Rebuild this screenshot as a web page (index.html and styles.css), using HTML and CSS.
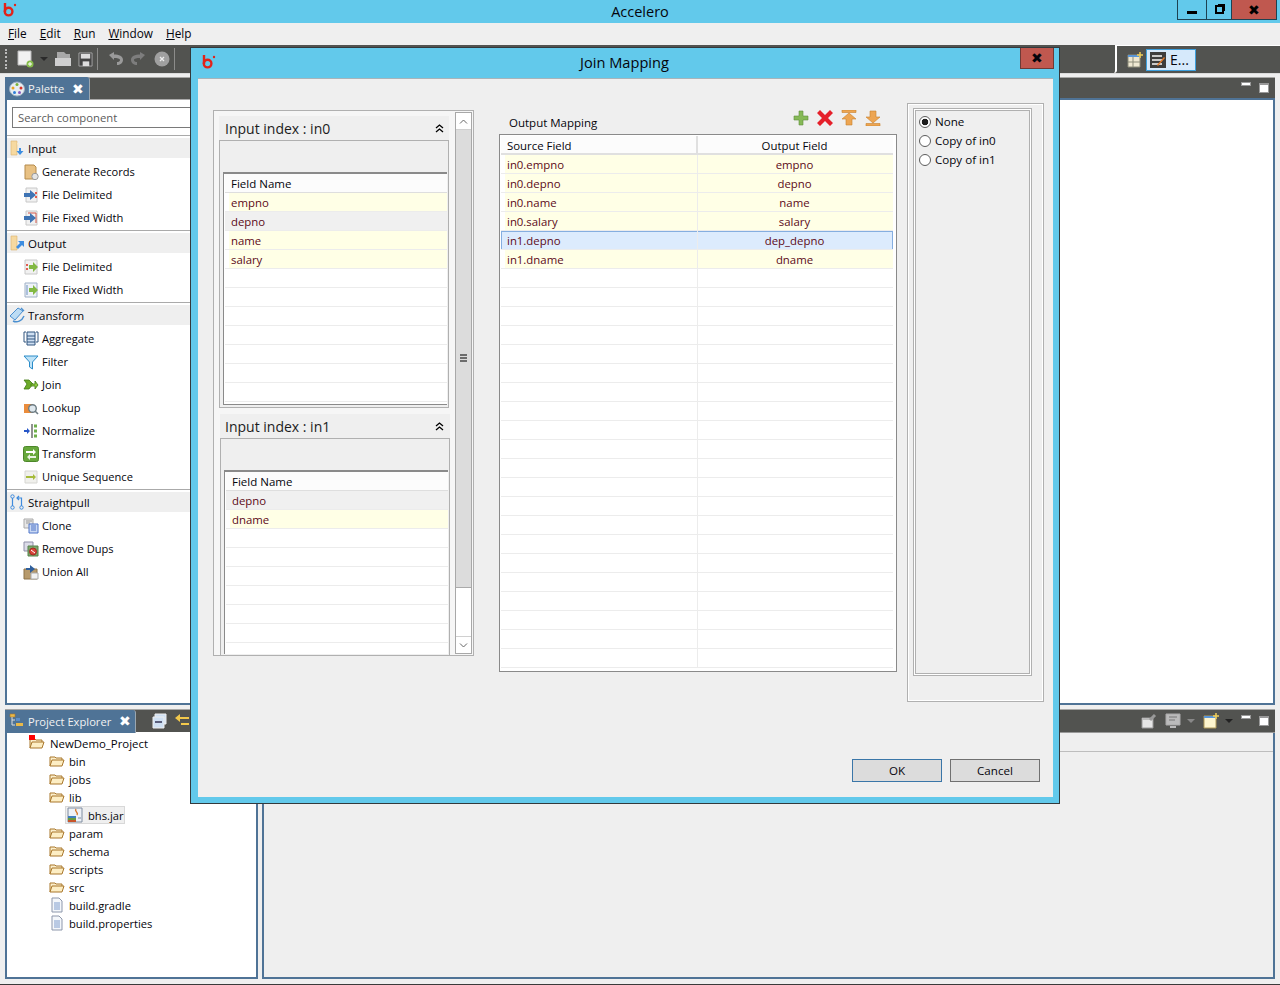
FILE: index.html
```html
<!DOCTYPE html>
<html lang="en">
<head>
    <meta charset="UTF-8">
    <title>Accelero</title>
    <link rel="stylesheet" href="styles.css">
</head>
<body>
<svg class="defs" width="0" height="0">
    <symbol id="logo" viewBox="0 0 16 16">
        <path d="M3 1v9" fill="none" stroke="#e2231a" stroke-width="2.4"/>
        <circle cx="6.6" cy="9.6" r="3.8" fill="none" stroke="#e2231a" stroke-width="2.4"/>
        <circle cx="13" cy="3" r="1.2" fill="#e2231a"/>
    </symbol>
    <symbol id="folder" viewBox="0 0 16 16">
        <path d="M1 13V4h5l1 1h6v2" fill="#fbeecb" stroke="#a9772b"/>
        <path d="M1 13l2-6h12l-2 6z" fill="#fdeec4" stroke="#a9772b"/>
    </symbol>
    <symbol id="doc" viewBox="0 0 16 16">
        <path d="M3 1h7l3 3v11H3z" fill="#f4f7fb" stroke="#8d97ab"/>
        <path d="M5 6h6M5 8h6M5 10h6M5 12h6" stroke="#7f9ccc"/>
    </symbol>
    <symbol id="drawer-in" viewBox="0 0 16 16">
        <path d="M2 1h6v14H2z" fill="#f6d9a0" stroke="#dcb46c" stroke-width=".6"/>
        <path d="M8 3h2v5" fill="#fbeed2"/>
        <path d="M12 8v3h2.5L11 15l-3.5-4H10V8z" fill="#3d8de0"/>
    </symbol>
    <symbol id="drawer-out" viewBox="0 0 16 16">
        <path d="M2 1h6v14H2z" fill="#f6d9a0" stroke="#dcb46c" stroke-width=".6"/>
        <path d="M7 12l4-4-2-2h6v6l-2-2-4 4z" fill="#3d8de0"/>
    </symbol>
    <symbol id="file-in" viewBox="0 0 16 16">
        <path d="M3 1h11v14H3z" fill="#f1f1f1" stroke="#c8c8c8"/>
        <path d="M1 6h6V3l6 5-6 5v-3H1z" fill="#3f74b4"/>
        <path d="M13 5v2M13 9v2" stroke="#e03a2a" stroke-width="1.6"/>
    </symbol>
    <symbol id="file-in2" viewBox="0 0 16 16">
        <path d="M3 1h11v14H3z" fill="#f1f1f1" stroke="#c8c8c8"/>
        <path d="M5 3h8v10" fill="none" stroke="#d0574a"/>
        <path d="M1 6h6V3l6 5-6 5v-3H1z" fill="#3f74b4"/>
    </symbol>
    <symbol id="file-out" viewBox="0 0 16 16">
        <path d="M2 1h12v14H2z" fill="#f1f1f1" stroke="#c8c8c8"/>
        <path d="M4 5v2M4 9v2" stroke="#e03a2a" stroke-width="1.6"/>
        <path d="M6 6h4V3l5 5-5 5v-3H6z" fill="#83b944"/>
    </symbol>
    <symbol id="file-out2" viewBox="0 0 16 16">
        <path d="M2 1h12v14H2z" fill="#eef2f8" stroke="#9fb0c6"/>
        <path d="M4 3v10" stroke="#6a8fc0"/>
        <path d="M6 6h4V3l5 5-5 5v-3H6z" fill="#83b944"/>
    </symbol>
    <symbol id="generate" viewBox="0 0 16 16">
        <path d="M2 1h9l2 2v12H2z" fill="#e8c184" stroke="#b48b4c"/>
        <circle cx="12" cy="12.5" r="3.2" fill="#e4e4e4" stroke="#999"/>
    </symbol>
    <symbol id="transform-group" viewBox="0 0 16 16">
        <path d="M1 9l8-8 5 3-8 9z" fill="#bcdcf4" stroke="#4a8fd0"/>
        <path d="M4 14c4 2 9 0 11-5M12 1l3 3" fill="none" stroke="#4a8fd0" stroke-width="1.4"/>
    </symbol>
    <symbol id="aggregate" viewBox="0 0 16 16">
        <path d="M3 1H1v10h2M13 1h2v10h-2" fill="none" stroke="#31557f"/>
        <path d="M4 1h8v13H4z" fill="#cfe0f3" stroke="#31557f"/>
        <path d="M4 5h8M4 8h8M4 11h8" stroke="#31557f"/>
    </symbol>
    <symbol id="filter" viewBox="0 0 16 16">
        <path d="M1 2h14L9.500 8v7l-3-2V8z" fill="#bfe3f7" stroke="#2b8cc9"/>
    </symbol>
    <symbol id="join" viewBox="0 0 16 16">
        <path d="M1 3h5l4 4-4 5H1l3-5z" fill="#6dab2a" stroke="#3f7813" stroke-width=".8"/>
        <path d="M8 7h4V4l3 4-3 4V9H8z" fill="#8cc63f" stroke="#3f7813" stroke-width=".8"/>
    </symbol>
    <symbol id="lookup" viewBox="0 0 16 16">
        <path d="M1 4h9v9H1z" fill="#ea8c3c"/>
        <circle cx="9.500" cy="8.500" r="3.800" fill="#dfe8ee" stroke="#6d7c83" stroke-width="1.400"/>
        <path d="M12 11l3 3" stroke="#6d7c83" stroke-width="1.600"/>
    </symbol>
    <symbol id="normalize" viewBox="0 0 16 16">
        <path d="M1 7h3V5l3 3-3 3V9H1z" fill="#2656c8"/>
        <path d="M9 1v14" stroke="#222"/>
        <path d="M11 3h3M11 8h3M11 13h3" stroke="#6faf4a" stroke-width="3"/>
    </symbol>
    <symbol id="transform" viewBox="0 0 16 16">
        <rect x="0.500" y="0.500" width="15" height="15" rx="2" fill="#67a83c" stroke="#4c8729"/>
        <path d="M3 5h7V3l3 3-3 3V7H3z" fill="#fff"/>
        <path d="M13 10H7V8l-3 3 3 3v-2h6z" fill="#fff" opacity=".85"/>
    </symbol>
    <symbol id="sequence" viewBox="0 0 16 16">
        <path d="M2 2h12v12H2z" fill="#f0f0ec" stroke="#d6d6d2"/>
        <path d="M3 7h7V5l3 3-3 3V9H3z" fill="#a6bb3a"/>
    </symbol>
    <symbol id="pull" viewBox="0 0 16 16">
        <circle cx="3.500" cy="2.500" r="1.700" fill="none" stroke="#3f8bdd"/>
        <circle cx="3.500" cy="13.500" r="1.700" fill="none" stroke="#3f8bdd"/>
        <circle cx="12.500" cy="13.500" r="1.700" fill="none" stroke="#3f8bdd"/>
        <path d="M3.500 4v8M12.500 12V4H8M10 2L8 4l2 2" fill="none" stroke="#3f8bdd" stroke-width="1.200"/>
    </symbol>
    <symbol id="clone" viewBox="0 0 16 16">
        <path d="M1 1h9v9H1z" fill="#e6e6e6" stroke="#aaa"/>
        <path d="M3 3h6M3 5h4" stroke="#999"/>
        <path d="M6 6h9v9H6z" fill="#c9d8f3" stroke="#4f74c8"/>
        <path d="M8 8h5M8 10h5M8 12h5" stroke="#4f74c8"/>
    </symbol>
    <symbol id="dups" viewBox="0 0 16 16">
        <path d="M1 1h9v9H1z" fill="#dcdce8" stroke="#8f8fa8"/>
        <path d="M5 5h10v10H5z" fill="#7aa86a" stroke="#56804a"/>
        <circle cx="10" cy="10.500" r="3.500" fill="#d9443a" stroke="#a02a22"/>
        <path d="M8 9l4 3" stroke="#fff"/>
    </symbol>
    <symbol id="union" viewBox="0 0 16 16">
        <path d="M1 5h13v10H1z" fill="#b79a6c" stroke="#8d7348"/>
        <path d="M3 4h4V1l5 4-5 4V6H3z" fill="#2f5f9c"/>
        <path d="M8 9h7v6H8z" fill="#f2f2f2" stroke="#aaa"/>
    </symbol>
    <symbol id="palette" viewBox="0 0 16 16">
        <ellipse cx="8" cy="8" rx="7.500" ry="7" fill="#e8edf2" stroke="#9fb0c0"/>
        <circle cx="4" cy="7" r="1.500" fill="#e8a320"/>
        <circle cx="8" cy="3.500" r="1.500" fill="#79b33a"/>
        <circle cx="12" cy="7" r="1.500" fill="#d8352a"/>
        <circle cx="5.500" cy="11.500" r="1.500" fill="#2f7fd8"/>
        <circle cx="10.500" cy="11.500" r="1.500" fill="#8a5ac0"/>
    </symbol>
    <symbol id="explorer" viewBox="0 0 16 16">
        <path d="M1 1h5v3H1z" fill="#e9b949" stroke="#a9772b" stroke-width=".6"/>
        <path d="M3 4v8h3M3 7h3" stroke="#ddd" fill="none"/>
        <path d="M7 5h4v3H7z" fill="#5b8dc9"/>
        <path d="M7 10h7v3H7z" fill="#e9b949"/>
    </symbol>
    <symbol id="jar" viewBox="0 0 16 16">
        <path d="M1 1h14v14H1z" fill="#eef1f6" stroke="#7f8ca0"/>
        <path d="M1 9h8v2H1z" fill="#3f7fbe"/>
        <path d="M1 11h8v2H1z" fill="#6a9b3a"/>
        <path d="M1 13h8v2H1z" fill="#c8552b"/>
        <path d="M9 2c-2 3 3 3 1 6" fill="none" stroke="#d8782a" stroke-width="1.400"/>
        <path d="M11 11h3" stroke="#7f8ca0"/>
    </symbol>
</svg>

<div class="app">
    <div class="titlebar">
        <svg class="logo"><use href="#logo"/></svg>
        <span class="app-title">Accelero</span>
        <div class="win-buttons">
            <div class="win-btn win-min"><span class="glyph-min"></span></div>
            <div class="win-btn win-max"><span class="glyph-max"></span></div>
            <div class="win-btn win-close">&#10006;</div>
        </div>
    </div>

    <div class="menubar">
        <span class="menu-item"><u>F</u>ile</span>
        <span class="menu-item"><u>E</u>dit</span>
        <span class="menu-item"><u>R</u>un</span>
        <span class="menu-item"><u>W</u>indow</span>
        <span class="menu-item"><u>H</u>elp</span>
    </div>

    <div class="toolbar">
        <div class="tools">
            <span class="gripper"></span>
            <svg class="tool tool-new" viewBox="0 0 18 18"><path d="M1 1h13v14H1z" fill="#f2f2f2" stroke="#bbb"/><circle cx="13" cy="14" r="3.500" fill="#86bd4a"/><path d="M11 14h4M13 12v4" stroke="#fff"/></svg>
            <span class="tool-arrow"></span>
            <svg class="tool tool-open" viewBox="0 0 18 18"><path d="M3 2h7l2 2h4v6H3z" fill="#a8a8a8"/><path d="M1 8h16v8H1z" fill="#cfcfcf"/></svg>
            <svg class="tool tool-save" viewBox="0 0 16 16"><path d="M1 1h14v14H1z" fill="#444" stroke="#a5a5a5"/><path d="M3 2h10v5H3z" fill="#ddd"/><path d="M5 10h7v5H5z" fill="#ddd"/></svg>
            <span class="tool-sep"></span>
            <svg class="tool tool-undo" viewBox="0 0 16 16"><path d="M1 4l5-3v2.500c5 0 9 1.500 9 5.500 0 3-3 5-6 5V11c1.500 0 3-.5 3-2 0-1.500-3-2-6-2v2z" fill="#9a9a9a"/></svg>
            <svg class="tool tool-redo" viewBox="0 0 16 16"><path d="M15 4l-5-3v2.500C5 3.500 1 5 1 9c0 3 3 5 6 5V11c-1.500 0-3-.5-3-2 0-1.500 3-2 6-2v2z" fill="#7d7d7d"/></svg>
            <svg class="tool tool-stop" viewBox="0 0 16 16"><circle cx="8" cy="8" r="7.500" fill="#a0a0a0"/><path d="M6 6l4 4M10 6l-4 4" stroke="#eee" stroke-width="1.300"/></svg>
            <span class="tool-sep tool-sep-2"></span>
        </div>
        <div class="perspectives">
            <svg class="persp-open" viewBox="0 0 16 16"><path d="M1 3h12v12H1z" fill="#efe8d2" stroke="#8d8d7a"/><path d="M1 3h12v2H1z" fill="#5a96d8"/><path d="M6 5v10M1 10h12" stroke="#8d8d7a"/><path d="M13 0v6M10 3h6" stroke="#f0cf5a" stroke-width="1.500"/></svg>
            <div class="persp-btn">
                <svg class="persp-icon" viewBox="0 0 16 16"><path d="M0 0h16v16H0z" fill="#3d3d3d"/><path d="M2 3h10v2H2zM2 7h10v2H2zM2 11h10v2H2z" fill="#c9c9c9"/><path d="M7 13l7-8 1 1-7 8z" fill="#e37a2a"/></svg>
                <span>E...</span>
            </div>
        </div>
    </div>

    <div class="workbench">
        <div class="side">
            <section class="panel panel-palette">
                <div class="tabbar">
                    <div class="tab tab-palette">
                        <svg class="icon"><use href="#palette"/></svg>
                        <span>Palette</span>
                        <span class="tab-close">&#10006;</span>
                    </div>
                </div>
                <div class="panel-body">
                    <div class="search">Search component</div>
                    <div class="group">
                        <div class="group-head"><svg class="icon"><use href="#drawer-in"/></svg>Input</div>
                        <ul class="items">
                            <li><svg class="icon"><use href="#generate"/></svg>Generate Records</li>
                            <li><svg class="icon"><use href="#file-in"/></svg>File Delimited</li>
                            <li><svg class="icon"><use href="#file-in2"/></svg>File Fixed Width</li>
                        </ul>
                    </div>
                    <div class="group">
                        <div class="group-head"><svg class="icon"><use href="#drawer-out"/></svg>Output</div>
                        <ul class="items">
                            <li><svg class="icon"><use href="#file-out"/></svg>File Delimited</li>
                            <li><svg class="icon"><use href="#file-out2"/></svg>File Fixed Width</li>
                        </ul>
                    </div>
                    <div class="group">
                        <div class="group-head"><svg class="icon"><use href="#transform-group"/></svg>Transform</div>
                        <ul class="items">
                            <li><svg class="icon"><use href="#aggregate"/></svg>Aggregate</li>
                            <li><svg class="icon"><use href="#filter"/></svg>Filter</li>
                            <li><svg class="icon"><use href="#join"/></svg>Join</li>
                            <li><svg class="icon"><use href="#lookup"/></svg>Lookup</li>
                            <li><svg class="icon"><use href="#normalize"/></svg>Normalize</li>
                            <li><svg class="icon"><use href="#transform"/></svg>Transform</li>
                            <li><svg class="icon"><use href="#sequence"/></svg>Unique Sequence</li>
                        </ul>
                    </div>
                    <div class="group">
                        <div class="group-head"><svg class="icon"><use href="#pull"/></svg>Straightpull</div>
                        <ul class="items">
                            <li><svg class="icon"><use href="#clone"/></svg>Clone</li>
                            <li><svg class="icon"><use href="#dups"/></svg>Remove Dups</li>
                            <li><svg class="icon"><use href="#union"/></svg>Union All</li>
                        </ul>
                    </div>
                </div>
            </section>

            <section class="panel panel-explorer">
                <div class="tabbar">
                    <div class="tab tab-explorer">
                        <svg class="icon"><use href="#explorer"/></svg>
                        <span>Project Explorer</span>
                        <span class="tab-close">&#10006;</span>
                    </div>
                    <svg class="tab-tool" viewBox="0 0 16 16"><path d="M3 1h11v10H3z" fill="#cfe0f3" stroke="#eee"/><path d="M1 4h11v11H1z" fill="#cfe0f3" stroke="#eee"/><path d="M3 9h7" stroke="#335" stroke-width="1.500"/></svg>
                    <svg class="tab-tool" viewBox="0 0 16 16"><path d="M1 5l5-4v3h9v2H6v3z" fill="#f2c84b"/><path d="M7 10h8v2H7z" fill="#f2c84b"/></svg>
                </div>
                <div class="tree">
                    <div class="tree-row tree-root"><svg class="icon"><use href="#folder"/></svg><i class="root-mark"></i>NewDemo_Project</div>
                    <div class="tree-row"><svg class="icon"><use href="#folder"/></svg>bin</div>
                    <div class="tree-row"><svg class="icon"><use href="#folder"/></svg>jobs</div>
                    <div class="tree-row"><svg class="icon"><use href="#folder"/></svg>lib</div>
                    <div class="tree-row tree-leaf"><span class="tree-sel"><svg class="icon"><use href="#jar"/></svg>bhs.jar</span></div>
                    <div class="tree-row"><svg class="icon"><use href="#folder"/></svg>param</div>
                    <div class="tree-row"><svg class="icon"><use href="#folder"/></svg>schema</div>
                    <div class="tree-row"><svg class="icon"><use href="#folder"/></svg>scripts</div>
                    <div class="tree-row"><svg class="icon"><use href="#folder"/></svg>src</div>
                    <div class="tree-row"><svg class="icon"><use href="#doc"/></svg>build.gradle</div>
                    <div class="tree-row"><svg class="icon"><use href="#doc"/></svg>build.properties</div>
                </div>
            </section>
        </div>

        <div class="main">
            <section class="panel panel-editor">
                <div class="tabbar tabbar-right">
                    <span class="view-min"></span>
                    <span class="view-max"></span>
                </div>
                <div class="editor-body"></div>
            </section>
            <section class="panel panel-console">
                <div class="tabbar tabbar-right">
                    <svg class="tab-tool tool-pin" viewBox="0 0 16 16"><path d="M1 5h11v10H1z" fill="#e6e6e6" stroke="#999"/><path d="M1 5h11v2H1z" fill="#bbb"/><path d="M9 7l5-5" stroke="#999" stroke-width="3"/></svg>
                    <svg class="tab-tool" viewBox="0 0 16 16"><path d="M1 1h14v11H1z" fill="#bbb" stroke="#aaa"/><path d="M4 4h8M4 7h6" stroke="#777"/><path d="M5 14h6" stroke="#bbb" stroke-width="2"/></svg>
                    <span class="tab-arrow tab-arrow-dim"></span>
                    <svg class="tab-tool" viewBox="0 0 16 16"><path d="M1 3h12v12H1z" fill="#fdf5cf" stroke="#b09a58"/><path d="M1 3h12v2H1z" fill="#5a96d8"/><path d="M13 0v6M10 3h6" stroke="#f0cf5a" stroke-width="1.500"/></svg>
                    <span class="tab-arrow"></span>
                    <span class="view-min"></span>
                    <span class="view-max"></span>
                </div>
                <div class="console-line"></div>
            </section>
        </div>
    </div>
    <div class="statusline"></div>
</div>

<div class="dialog">
    <div class="dialog-title">
        <svg class="logo"><use href="#logo"/></svg>
        <span class="dialog-name">Join Mapping</span>
        <div class="dialog-close">&#10006;</div>
    </div>
    <div class="dialog-body">
        <div class="columns">
            <div class="inputs">
                <div class="inputs-scroll">
                    <div class="input-section">
                        <div class="section-head">
                            <span>Input index : in0</span>
                            <svg class="collapse" viewBox="0 0 9 9"><path d="M1 4l3.500-3L8 4M1 8l3.500-3L8 8" fill="none" stroke="#000" stroke-width="1.300"/></svg>
                        </div>
                        <div class="section-box">
                            <div class="field-table">
                                <div class="field-head">Field Name</div>
                                <div class="field-row filled">empno</div>
                                <div class="field-row current">depno</div>
                                <div class="field-row filled">name</div>
                                <div class="field-row filled">salary</div>
                                <div class="field-row"></div>
                                <div class="field-row"></div>
                                <div class="field-row"></div>
                                <div class="field-row"></div>
                                <div class="field-row"></div>
                                <div class="field-row"></div>
                                <div class="field-row"></div>
                            </div>
                        </div>
                    </div>
                    <div class="input-section second">
                        <div class="section-head">
                            <span>Input index : in1</span>
                            <svg class="collapse" viewBox="0 0 9 9"><path d="M1 4l3.500-3L8 4M1 8l3.500-3L8 8" fill="none" stroke="#000" stroke-width="1.300"/></svg>
                        </div>
                        <div class="section-box">
                            <div class="field-table">
                                <div class="field-head">Field Name</div>
                                <div class="field-row current">depno</div>
                                <div class="field-row filled">dname</div>
                                <div class="field-row"></div>
                                <div class="field-row"></div>
                                <div class="field-row"></div>
                                <div class="field-row"></div>
                                <div class="field-row"></div>
                                <div class="field-row"></div>
                            </div>
                        </div>
                    </div>
                </div>
                <div class="scrollbar">
                    <div class="scroll-btn"><svg viewBox="0 0 9 5"><path d="M1 4.500l3.500-3.500L8 4.500" fill="none" stroke="#666"/></svg></div>
                    <div class="scroll-thumb"><span class="thumb-grip"></span></div>
                    <div class="scroll-track"></div>
                    <div class="scroll-btn"><svg viewBox="0 0 9 5"><path d="M1 .5l3.500 3.500L8 .5" fill="none" stroke="#666"/></svg></div>
                </div>
            </div>

            <div class="mapping">
                <div class="mapping-top">
                    <span class="mapping-label">Output Mapping</span>
                    <div class="mapping-tools">
                        <svg viewBox="0 0 16 16"><path d="M6 1h4v5h5v4h-5v5H6v-5H1V6h5z" fill="#86b957" stroke="#5f8f3a" stroke-width=".6"/></svg>
                        <svg viewBox="0 0 16 16"><path d="M3 0l5 5 5-5 3 3-5 5 5 5-3 3-5-5-5 5-3-3 5-5-5-5z" fill="#e5202a"/></svg>
                        <svg viewBox="0 0 16 16"><path d="M1 0h14v2.500H1zM8 3l7 6h-4v6H5V9H1z" fill="#eda552" stroke="#c87f2c" stroke-width=".6"/></svg>
                        <svg viewBox="0 0 16 16"><path d="M1 13.500h14V16H1zM8 13l7-6h-4V1H5v6H1z" fill="#eda552" stroke="#c87f2c" stroke-width=".6"/></svg>
                    </div>
                </div>
                <div class="map-table">
                    <div class="map-head"><span class="map-src">Source Field</span><span class="map-out">Output Field</span></div>
                    <div class="map-row filled"><span class="map-src">in0.empno</span><span class="map-out">empno</span></div>
                    <div class="map-row filled"><span class="map-src">in0.depno</span><span class="map-out">depno</span></div>
                    <div class="map-row filled"><span class="map-src">in0.name</span><span class="map-out">name</span></div>
                    <div class="map-row filled"><span class="map-src">in0.salary</span><span class="map-out">salary</span></div>
                    <div class="map-row selected"><span class="map-src">in1.depno</span><span class="map-out">dep_depno</span></div>
                    <div class="map-row filled"><span class="map-src">in1.dname</span><span class="map-out">dname</span></div>
                    <div class="map-row"><span class="map-src"></span><span class="map-out"></span></div>
                    <div class="map-row"><span class="map-src"></span><span class="map-out"></span></div>
                    <div class="map-row"><span class="map-src"></span><span class="map-out"></span></div>
                    <div class="map-row"><span class="map-src"></span><span class="map-out"></span></div>
                    <div class="map-row"><span class="map-src"></span><span class="map-out"></span></div>
                    <div class="map-row"><span class="map-src"></span><span class="map-out"></span></div>
                    <div class="map-row"><span class="map-src"></span><span class="map-out"></span></div>
                    <div class="map-row"><span class="map-src"></span><span class="map-out"></span></div>
                    <div class="map-row"><span class="map-src"></span><span class="map-out"></span></div>
                    <div class="map-row"><span class="map-src"></span><span class="map-out"></span></div>
                    <div class="map-row"><span class="map-src"></span><span class="map-out"></span></div>
                    <div class="map-row"><span class="map-src"></span><span class="map-out"></span></div>
                    <div class="map-row"><span class="map-src"></span><span class="map-out"></span></div>
                    <div class="map-row"><span class="map-src"></span><span class="map-out"></span></div>
                    <div class="map-row"><span class="map-src"></span><span class="map-out"></span></div>
                    <div class="map-row"><span class="map-src"></span><span class="map-out"></span></div>
                    <div class="map-row"><span class="map-src"></span><span class="map-out"></span></div>
                    <div class="map-row"><span class="map-src"></span><span class="map-out"></span></div>
                    <div class="map-row"><span class="map-src"></span><span class="map-out"></span></div>
                    <div class="map-row"><span class="map-src"></span><span class="map-out"></span></div>
                    <div class="map-row"><span class="map-src"></span><span class="map-out"></span></div>
                </div>
            </div>

            <div class="options">
                <div class="options-inner">
                    <label class="radio-row"><span class="radio checked"></span>None</label>
                    <label class="radio-row"><span class="radio"></span>Copy of in0</label>
                    <label class="radio-row"><span class="radio"></span>Copy of in1</label>
                </div>
            </div>
        </div>
        <div class="dialog-buttons">
            <button class="btn btn-default">OK</button>
            <button class="btn">Cancel</button>
        </div>
    </div>
</div>
</body>
</html>
```

FILE: styles.css
```css
* {
    padding: 0;
    margin: 0;
    box-sizing: border-box;
}
:root {
    --sky: #62c9eb;
    --dark: #525350;
    --tab: #4f7396;
    --light: #efefef;
    --row-text: #5c0a18;
}
html, body {
    width: 1280px;
    height: 985px;
    overflow: hidden;
}
body {
    position: relative;
    background: var(--light);
    color: #05050c;
    font-family: "Open Sans", "Noto Sans", sans-serif;
    font-size: 11.1px;
}
.defs {
    position: absolute;
}
.app {
    display: flex;
    flex-direction: column;
    height: 985px;
}
.icon {
    width: 16px;
    height: 16px;
    flex: none;
}

/* title and menu */
.titlebar {
    display: flex;
    height: 23px;
    background: var(--sky);
    flex: none;
}
.titlebar .logo {
    width: 16px;
    height: 16px;
    margin: 2px 0 0 2px;
}
.app-title {
    position: absolute;
    left: 0;
    width: 1280px;
    top: 3px;
    text-align: center;
    font-size: 14.5px;
    line-height: 18px;
}
.win-buttons {
    display: flex;
    position: absolute;
    left: 1177px;
    top: 0;
    height: 20px;
    border: 1px solid #1d4252;
    border-top: 0;
    z-index: 1;
}
.win-btn {
    display: flex;
    justify-content: center;
    align-items: center;
    width: 28px;
}
.win-max {
    width: 26px;
    border-left: 1px solid #1d4252;
    border-right: 1px solid #1d4252;
}
.win-close {
    width: 44px;
    background: #c0584f;
    color: #000;
    font-size: 14px;
}
.glyph-min {
    width: 10px;
    height: 3px;
    margin-top: 5px;
    background: #000;
}
.glyph-max {
    width: 9px;
    height: 9px;
    border: 2px solid #000;
    box-shadow: 2px -2px 0 -1px #000;
}
.menubar {
    display: flex;
    align-items: center;
    gap: 13px;
    height: 22px;
    padding: 0 0 2px 8px;
    flex: none;
    font-size: 11.8px;
    line-height: 20px;
}

/* main toolbar */
.toolbar {
    display: flex;
    height: 29px;
    background: var(--dark);
    flex: none;
    border-bottom: 1px solid #dcdcdc;
}
.tools {
    display: flex;
    align-items: center;
    width: 1117px;
    padding-left: 5px;
    border-right: 2px solid #fff;
    border-bottom-right-radius: 3px;
}
.perspectives {
    display: flex;
    align-items: center;
    flex: 1;
    padding-left: 10px;
    border-top: 1px solid #fff;
}
.gripper {
    width: 2px;
    height: 20px;
    border-left: 2px dotted #bbb;
}
.tool {
    flex: none;
}
.tool-new {
    width: 18px;
    height: 18px;
    margin-left: 10px;
}
.tool-arrow {
    width: 0;
    height: 0;
    margin-left: 5px;
    border: 4px solid transparent;
    border-top: 4px solid #2a2a2a;
    border-bottom: 0;
}
.tool-open {
    width: 18px;
    height: 18px;
    margin-left: 6px;
}
.tool-save {
    width: 15px;
    height: 15px;
    margin-left: 6px;
}
.tool-sep {
    width: 1px;
    height: 22px;
    margin-left: 4px;
    background: #8c8c8a;
}
.tool-undo, .tool-redo, .tool-stop {
    width: 16px;
    height: 16px;
}
.tool-undo {
    margin-left: 10px;
}
.tool-redo {
    margin-left: 6px;
}
.tool-stop {
    margin-left: 8px;
}
.tool-sep-2 {
    margin-left: 4px;
}
.persp-open {
    width: 16px;
    height: 16px;
}
.persp-btn {
    display: flex;
    align-items: center;
    gap: 4px;
    width: 50px;
    height: 22px;
    margin-left: 3px;
    padding-left: 3px;
    background: #d6e9fb;
    border: 1px solid #3d9fdc;
    font-size: 14px;
}
.persp-icon {
    width: 16px;
    height: 16px;
}

/* workbench */
.workbench {
    display: flex;
    flex: 1;
    padding: 3px 5px 5px 5px;
    gap: 4px;
}
.statusline {
    height: 1px;
    background: #3a3a3a;
    flex: none;
}
.side {
    display: flex;
    flex-direction: column;
    width: 253px;
    gap: 4px;
    flex: none;
}
.main {
    display: flex;
    flex-direction: column;
    flex: 1;
    gap: 4px;
}
.panel {
    display: flex;
    flex-direction: column;
    border: 2px solid var(--tab);
    border-top: 0;
}
.panel-palette, .panel-editor {
    height: 628px;
    background: #fff;
}
.panel-explorer, .panel-console {
    flex: 1;
}
.panel-explorer {
    background: #fff;
}
.tabbar {
    display: flex;
    align-items: center;
    height: 23px;
    margin: 0 -2px;
    background: var(--dark);
    border-top: 1px solid #a8a8a6;
    flex: none;
}
.panel-palette .tabbar {
    border-bottom: 1px solid #aaa;
}
.tabbar-right {
    justify-content: flex-end;
    padding-right: 6px;
}
.panel-console .tabbar-right {
    border-bottom: 1px solid #999;
    height: 24px;
}
.panel-editor .tabbar-right {
    border-bottom: 2px solid var(--tab);
}
.tab {
    display: flex;
    align-items: center;
    gap: 3px;
    height: 23px;
    padding-left: 4px;
    background: var(--tab);
    color: #f2f2f2;
    border-top-right-radius: 3px;
    border-right: 1px solid #9aa6b0;
    font-size: 11.2px;
}
.tab-palette {
    width: 85px;
}
.tab-explorer {
    width: 131px;
    margin-right: 16px;
}
.tab-close {
    margin-left: 5px;
    font-size: 14px;
    line-height: 14px;
    color: #fff;
}
.tab-tool {
    width: 16px;
    height: 16px;
    margin-right: 6px;
    flex: none;
}
.tab-tool.tool-pin {
    margin-right: 8px;
}
.tab-arrow {
    width: 0;
    height: 0;
    border: 4px solid transparent;
    border-top: 4px solid #222;
    border-bottom: 0;
    margin-right: 8px;
}
.view-min {
    width: 10px;
    height: 4px;
    margin-right: 8px;
    margin-bottom: 8px;
    background: #fff;
    border: 1px solid #999;
}
.view-max {
    width: 10px;
    height: 10px;
    background: #fff;
    border: 1px solid #999;
    border-top-width: 2px;
}
.tab-arrow.tab-arrow-dim {
    border-top-color: #888;
}

/* palette */
.panel-body {
    flex: 1;
    padding: 7px 0 0 0;
}
.search {
    height: 21px;
    margin: 0 0 7px 5px;
    padding: 0 0 0 5px;
    border: 1px solid #7a7a7a;
    line-height: 19px;
    color: #5c5c5c;
    font-size: 11.3px;
}
.group {
    border-top: 1px solid #aaa;
    padding-top: 2px;
}
.group-head {
    display: flex;
    align-items: center;
    gap: 3px;
    height: 20px;
    padding-left: 2px;
    background: var(--light);
    font-size: 11.5px;
}
.items {
    list-style: none;
    padding: 2px 0 1px 0;
}
.items li {
    display: flex;
    align-items: center;
    gap: 3px;
    height: 23px;
    padding-left: 16px;
}

/* project explorer */
.tree {
    padding-top: 2px;
}
.tree-row {
    display: flex;
    align-items: center;
    gap: 4px;
    height: 18px;
    padding-left: 42px;
    position: relative;
    font-size: 11.2px;
}
.tree-root {
    padding-left: 22px;
    gap: 5px;
    font-size: 11.4px;
}
.root-mark {
    position: absolute;
    left: 22px;
    top: 1px;
    width: 6px;
    height: 5px;
    background: #f00;
}
.tree-leaf {
    padding-left: 58px;
}
.tree-sel {
    display: flex;
    align-items: center;
    gap: 5px;
    height: 18px;
    width: 60px;
    padding: 0 1px;
    background: var(--light);
    border: 1px solid #d8d8d8;
}
.editor-body {
    flex: 1;
    background: #fff;
}
.panel-console {
    background: var(--light);
}
.console-line {
    height: 1px;
    margin-top: 18px;
    background: #bdbdbd;
}

/* dialog */
.dialog {
    position: absolute;
    left: 190px;
    top: 47px;
    width: 870px;
    height: 757px;
    display: flex;
    flex-direction: column;
    padding: 0 6px 6px 7px;
    background: var(--sky);
    border: 1px solid #33393c;
    z-index: 2;
}
.dialog-title {
    display: flex;
    height: 30px;
    flex: none;
    position: relative;
}
.dialog-title .logo {
    width: 16px;
    height: 16px;
    margin: 6px 0 0 3px;
}
.dialog-name {
    position: absolute;
    left: 0;
    width: 853px;
    top: 5px;
    text-align: center;
    font-size: 14.6px;
    line-height: 18px;
}
.dialog-close {
    position: absolute;
    right: -1px;
    top: 0;
    width: 34px;
    height: 21px;
    background: #c0584f;
    border: 1px solid #6e3a36;
    border-top: 0;
    text-align: center;
    font-size: 14px;
    line-height: 19px;
}
.dialog-body {
    flex: 1;
    display: flex;
    flex-direction: column;
    background: var(--light);
    border-top: 1px solid #a8b4ba;
    padding: 24px 9px 15px 15px;
}
.columns {
    display: flex;
    align-items: flex-start;
    height: 599px;
    flex: none;
}

/* input tables */
.inputs {
    display: flex;
    width: 261px;
    height: 546px;
    margin-top: 7px;
    border: 1px solid #b0b0b0;
    background: #f6f6f6;
    flex: none;
}
.inputs-scroll {
    width: 241px;
    height: 544px;
    padding: 5px 0 0 5px;
    overflow: hidden;
}
.input-section.second {
    margin: 6px 0 0 1px;
}
.section-head {
    display: flex;
    justify-content: space-between;
    align-items: center;
    width: 230px;
    height: 24px;
    padding: 0 5px 0 6px;
    background: var(--light);
    font-size: 14px;
    color: #1c1c1c;
}
.second .section-head {
    padding: 0 6px 0 5px;
}
.collapse {
    width: 9px;
    height: 9px;
}
.section-box {
    width: 230px;
    height: 268px;
    padding: 31px 1px 0 3px;
    background: var(--light);
    border: 1px solid #b0b0b0;
}
.second .section-box {
    height: 220px;
}
.field-table {
    height: 233px;
    background: #fff;
    border: 1px solid #8a8a8a;
    border-right: 0;
    border-top-width: 2px;
    padding-left: 1px;
}
.second .field-table {
    height: 184px;
    border-bottom: 0;
}
.field-head {
    height: 19px;
    padding-left: 6px;
    background: #fcfcfc;
    border-bottom: 1px solid #dedede;
    line-height: 20px;
    font-size: 11.5px;
}
.field-row {
    height: 19px;
    padding-left: 6px;
    border-bottom: 1px solid #ececec;
    line-height: 20px;
    color: var(--row-text);
    font-size: 11.4px;
}
.field-row.filled {
    background: linear-gradient(to right, #fff 4px, #ffffe6 4px);
}
.field-row.current {
    background: #f0f0f0;
}
.scrollbar {
    display: flex;
    flex-direction: column;
    width: 17px;
    height: 542px;
    margin: 1px 0 0 0;
    background: #fff;
    border: 1px solid #a8a8a8;
    flex: none;
}
.scroll-btn {
    display: flex;
    justify-content: center;
    align-items: center;
    height: 17px;
    background: #fff;
    border-top: 1px solid #d0d0d0;
    flex: none;
}
.scroll-btn:first-child {
    border-top: 0;
    border-bottom: 1px solid #d0d0d0;
}
.scroll-btn svg {
    width: 9px;
    height: 5px;
}
.scroll-thumb {
    display: flex;
    justify-content: center;
    align-items: center;
    height: 458px;
    padding-bottom: 1px;
    background: #dcdcdc;
    border-bottom: 1px solid #aaa;
    flex: none;
}
.thumb-grip {
    width: 7px;
    height: 8px;
    background: repeating-linear-gradient(#6c6c6c 0, #6c6c6c 2px, transparent 2px, transparent 3px);
}
.scroll-track {
    flex: 1;
}

/* output mapping */
.mapping {
    width: 398px;
    margin: 7px 0 0 25px;
    flex: none;
}
.mapping-top {
    display: flex;
    justify-content: space-between;
    align-items: flex-end;
    height: 24px;
    padding: 0 16px 3px 10px;
}
.mapping-label {
    font-size: 11.5px;
    line-height: 16px;
}
.mapping-tools {
    display: flex;
    gap: 8px;
    margin-bottom: 5px;
}
.mapping-tools svg {
    width: 16px;
    height: 16px;
}
.map-table {
    height: 538px;
    padding: 1px 3px 0 1px;
    background: #fff;
    border: 1px solid #8a8a8a;
}
.map-head, .map-row {
    display: flex;
    height: 19px;
    font-size: 11.4px;
    line-height: 20px;
    border-bottom: 1px solid #ececec;
}
.map-head {
    background: #fcfcfc;
    border-bottom: 2px solid #e0e0e0;
}
.map-row {
    color: var(--row-text);
}
.map-src {
    width: 197px;
    padding-left: 6px;
    border-right: 1px solid #ececec;
}
.map-head .map-src {
    border-right: 2px solid #e0e0e0;
}
.map-out {
    flex: 1;
    padding-right: 2px;
    text-align: center;
}
.map-row.filled {
    background: linear-gradient(to right, #fff 4px, #ffffe6 4px);
}
.map-row.selected {
    background: #dcebfd;
    box-shadow: inset 0 1px 0 #85aee0, inset 1px 0 0 #85aee0, inset -1px 0 0 #85aee0;
}

/* radio column */
.options {
    width: 137px;
    height: 599px;
    margin-left: 10px;
    padding: 4px 11px 0 5px;
    border: 1px solid #b0b0b0;
    box-shadow: inset 0 0 0 1px #fff;
    flex: none;
}
.options-inner {
    height: 568px;
    padding: 3px 0 0 5px;
    border: 1px solid #b0b0b0;
    box-shadow: inset 0 0 0 1px #fff, inset 0 0 0 2px #b0b0b0;
}
.radio-row {
    display: flex;
    align-items: center;
    gap: 4px;
    height: 19px;
    font-size: 11.6px;
}
.radio {
    width: 12px;
    height: 12px;
    border: 1px solid #5c5c5c;
    border-radius: 50%;
    background: #fff;
    flex: none;
}
.radio.checked {
    background: radial-gradient(circle, #1c1c1c 3px, #fff 3.6px);
}

/* bottom buttons */
.dialog-buttons {
    display: flex;
    justify-content: flex-end;
    gap: 8px;
    margin: 57px 4px 0 0;
}
.btn {
    width: 90px;
    height: 23px;
    background: #dcdcdc;
    border: 1px solid #707070;
    font-family: inherit;
    font-size: 11.6px;
    color: #05050c;
}
.btn-default {
    border-color: #3a76a8;
}
```
